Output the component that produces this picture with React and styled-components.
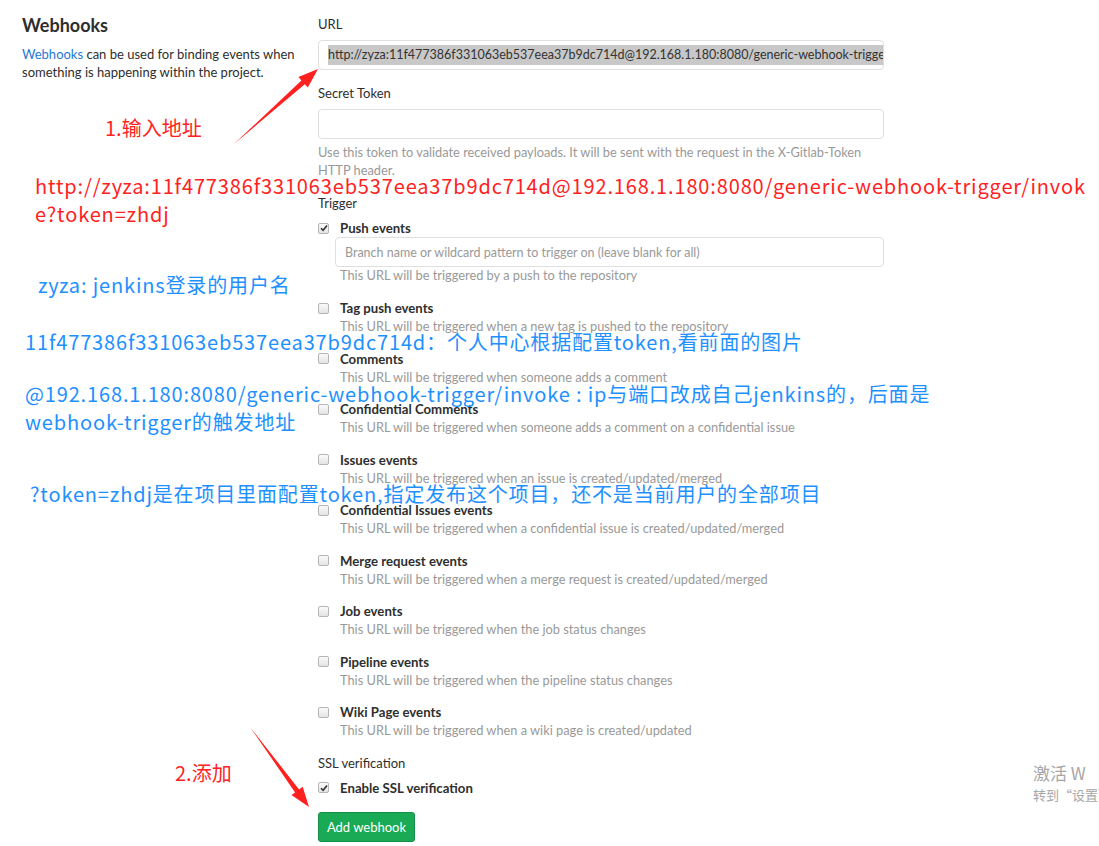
import React from 'react'
import styled, { createGlobalStyle } from 'styled-components'

const Global = createGlobalStyle`
    html, body {
        margin: 0;
        padding: 0;
        background: #fff;
        overflow: hidden;
    }
    body {
        font-family: Lato, "Noto Sans", "Noto Sans CJK SC", sans-serif;
        color: #2e2e2e;
    }
`

const Page = styled.div`
    position: relative;
    width: 1099px;
    height: 846px;
    overflow: hidden;
`

const Layout = styled.div`
    display: grid;
    grid-template-columns: 296px 566px;
    padding-left: 22px;
`

const Intro = styled.div`
    padding-top: 13px;
    padding-right: 18px;
    h4 {
        margin: 0 0 8px;
        font-size: 18px;
        font-weight: 700;
        line-height: 24px;
        color: #2e2e2e;
    }
    p {
        margin: 0;
        font-size: 13px;
        line-height: 18px;
        color: #2e2e2e;
    }
    a {
        color: #1f78d1;
        text-decoration: none;
    }
`

const Form = styled.div`
    padding-top: 15px;
`

const Label = styled.div`
    font-size: 13px;
    line-height: 18px;
    margin-bottom: ${p => p.$gap || 7}px;
    margin-top: ${p => p.$top || 0}px;
`

const Field = styled.div`
    box-sizing: border-box;
    height: 30px;
    margin-left: ${p => p.$indent || 0}px;
    padding: 0 9px;
    border: 1px solid #dfdfdf;
    border-radius: 4px;
    display: flex;
    align-items: center;
    overflow: hidden;
    white-space: nowrap;
    font-size: 12.5px;
    color: ${p => (p.$placeholder ? '#999' : '#333')};
`

const Selected = styled.span`
    background: #c8c8c8;
    line-height: 20px;
`

const Help = styled.div`
    font-size: 12.8px;
    line-height: ${p => p.$lh || 18}px;
    color: #999;
    margin-top: ${p => p.$top || 0}px;
    margin-left: ${p => p.$indent || 0}px;
`

const Event = styled.div`
    margin-bottom: 14.5px;
`

const CheckRow = styled.div`
    display: flex;
    align-items: center;
    gap: 11px;
    font-size: 13.2px;
    line-height: 18px;
    font-weight: 700;
    color: #2e2e2e;
`

const Box = styled.span`
    box-sizing: border-box;
    width: 11px;
    height: 11px;
    border: 1px solid #b5b5b5;
    border-radius: 2px;
    background: linear-gradient(#fafafa, #e4e4e4);
    display: inline-grid;
    place-content: center;
`

const Button = styled.button`
    margin-top: 15px;
    height: 30px;
    width: 97px;
    padding: 0;
    border: 1px solid #168f48;
    border-radius: 3px;
    background: #1aaa55;
    color: #fff;
    font-family: inherit;
    font-size: 13px;
`

const Overlay = styled.div`
    position: absolute;
    inset: 0;
    pointer-events: none;
    font-family: "Noto Sans CJK SC", "Noto Sans", sans-serif;
`

const Note = styled.div`
    position: absolute;
    white-space: nowrap;
    font-size: 20px;
    line-height: 28px;
    letter-spacing: ${p => (p.$wide ? 0.85 : 0)}px;
    color: ${p => (p.$blue ? '#1e90ff' : '#ff2222')};
`

const Arrows = styled.svg`
    position: absolute;
    left: 0;
    top: 0;
`

const Watermark = styled.div`
    position: absolute;
    left: 1033px;
    top: 762px;
    width: 66px;
    overflow: hidden;
    white-space: nowrap;
    color: #a6a6a6;
`

const WatermarkLine = styled.div`
    font-size: ${p => (p.$big ? 17 : 13)}px;
    line-height: ${p => (p.$big ? 22 : 18)}px;
    margin-top: ${p => (p.$big ? 0 : 2)}px;
    width: ${p => (p.$big ? 54 : 66)}px;
    overflow: hidden;
`

const Check = ({ checked }) => (
    <Box>
        {checked && (
            <svg width="8" height="8" viewBox="0 0 8 8">
                <path d="M1 4.2 L3.1 6.3 L7 1.4" fill="none" stroke="#333" strokeWidth="1.6" />
            </svg>
        )}
    </Box>
)

const events = [
    ['Tag push events', 'This URL will be triggered when a new tag is pushed to the repository'],
    ['Comments', 'This URL will be triggered when someone adds a comment'],
    ['Confidential Comments', 'This URL will be triggered when someone adds a comment on a confidential issue'],
    ['Issues events', 'This URL will be triggered when an issue is created/updated/merged'],
    ['Confidential Issues events', 'This URL will be triggered when a confidential issue is created/updated/merged'],
    ['Merge request events', 'This URL will be triggered when a merge request is created/updated/merged'],
    ['Job events', 'This URL will be triggered when the job status changes'],
    ['Pipeline events', 'This URL will be triggered when the pipeline status changes'],
    ['Wiki Page events', 'This URL will be triggered when a wiki page is created/updated'],
]

const url = 'http://zyza:11f477386f331063eb537eea37b9dc714d@192.168.1.180:8080/generic-webhook-trigger/invoke?token=zhdj'

export default function App() {
    return (
        <Page>
            <Global />
            <Layout>
                <Intro>
                    <h4>Webhooks</h4>
                    <p>
                        <a href="#">Webhooks</a> can be used for binding events when something is happening within the project.
                    </p>
                </Intro>
                <Form>
                    <Label>URL</Label>
                    <Field>
                        <Selected>{url}</Selected>
                    </Field>
                    <Label $top={14}>Secret Token</Label>
                    <Field />
                    <Help $top={4}>
                        Use this token to validate received payloads. It will be sent with the request in the X-Gitlab-Token HTTP header.
                    </Help>
                    <Label $top={15}>Trigger</Label>
                    <CheckRow>
                        <Check checked /> Push events
                    </CheckRow>
                    <Field $indent={17} $placeholder>
                        Branch name or wildcard pattern to trigger on (leave blank for all)
                    </Field>
                    <Help $indent={22} $lh={16}>This URL will be triggered by a push to the repository</Help>
                    <div style={{ height: 16 }} />
                    {events.map(([title, text]) => (
                        <Event key={title}>
                            <CheckRow>
                                <Check /> {title}
                            </CheckRow>
                            <Help $indent={22}>{text}</Help>
                        </Event>
                    ))}
                    <Label>SSL verification</Label>
                    <CheckRow>
                        <Check checked /> Enable SSL verification
                    </CheckRow>
                    <Button>Add webhook</Button>
                </Form>
            </Layout>

            <Overlay>
                <Arrows width="1099" height="846" viewBox="0 0 1099 846">
                    <polygon points="234,144 301.4,80.4 298.4,77.1 318,69 307.8,87.5 304.8,84.2" fill="#ff2020" />
                    <polygon points="250,727 295.1,792.4 291.5,795.1 309,807 302.7,786.7 299.1,789.4" fill="#ff2020" />
                </Arrows>
                <Note style={{ left: 105, top: 114 }}>1.输入地址</Note>
                <Note $wide style={{ left: 35, top: 172 }}>
                    http://zyza:11f477386f331063eb537eea37b9dc714d@192.168.1.180:8080/generic-webhook-trigger/invok
                    <br />
                    e?token=zhdj
                </Note>
                <Note $blue $wide style={{ left: 38, top: 271 }}>zyza: jenkins登录的用户名</Note>
                <Note $blue $wide style={{ left: 25, top: 328 }}>11f477386f331063eb537eea37b9dc714d：个人中心根据配置token,看前面的图片</Note>
                <Note $blue $wide style={{ left: 25, top: 380 }}>
                    @192.168.1.180:8080/generic-webhook-trigger/invoke : ip与端口改成自己jenkins的，后面是
                    <br />
                    webhook-trigger的触发地址
                </Note>
                <Note $blue $wide style={{ left: 30, top: 480 }}>?token=zhdj是在项目里面配置token,指定发布这个项目，还不是当前用户的全部项目</Note>
                <Note style={{ left: 175, top: 759 }}>2.添加</Note>
                <Watermark>
                    <WatermarkLine $big>激活 Windows</WatermarkLine>
                    <WatermarkLine>转到“设置”以激活 Windows。</WatermarkLine>
                </Watermark>
            </Overlay>
        </Page>
    )
}
